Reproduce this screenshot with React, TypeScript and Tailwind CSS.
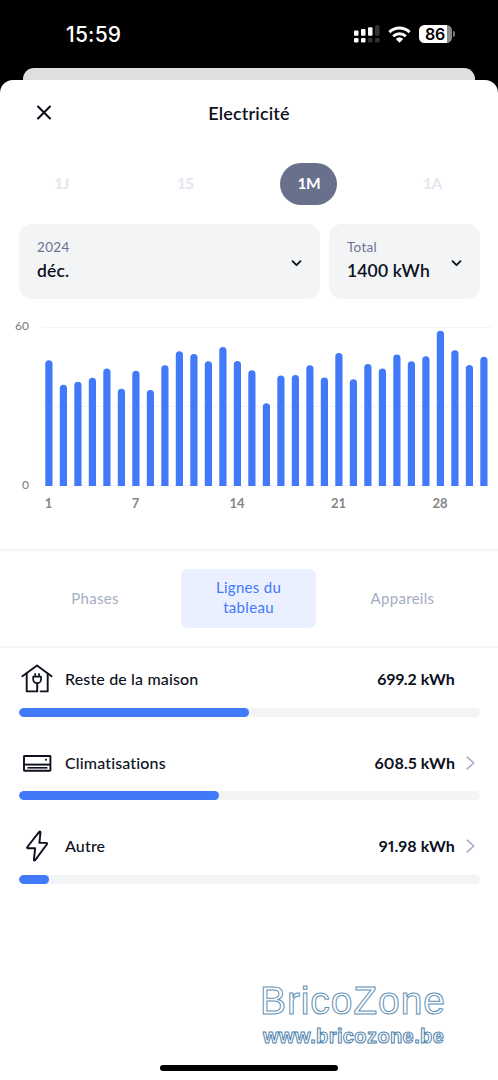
import React from "react";
import clsx from "clsx";

const ranges = [
    { label: "1J" },
    { label: "1S" },
    { label: "1M", active: true },
    { label: "1A" },
];

const dailyUsage = [
    47.6, 38.3, 39.5, 41, 44.5, 36.8, 43.6, 36.3, 45.7, 51, 50, 47.2, 52.6,
    47.3, 43.8, 31.3, 41.8, 42, 45.7, 41.1, 50.3, 40.4, 46.2, 44.5, 49.8, 47.2,
    49.1, 58.8, 51.4, 45.8, 48.9,
];

const dayLabels = [1, 7, 14, 21, 28];

const HouseIcon = () => (
    <svg width="32" height="32" viewBox="0 0 32 32" fill="none" stroke="#0c111d" strokeWidth="1.9" strokeLinecap="round" strokeLinejoin="round">
        <path d="M1.4 13.3 16 2.4l14.6 10.9" />
        <path d="M5.7 10.6v17.8h10.5V20" />
        <path d="M19.6 28.4h7.1V10.6" />
        <path d="M12.2 13.6h7.8v2.8a3.9 3.9 0 0 1-7.8 0z" strokeWidth="1.7" />
        <path d="M14.2 13v-2.2M18 13v-2.2" strokeWidth="1.7" />
    </svg>
);

const AirConditionerIcon = () => (
    <svg width="32" height="32" viewBox="0 0 32 32" fill="none" stroke="#0c111d" strokeWidth="1.9">
        <rect x="3" y="9" width="26.4" height="14.8" rx="0.5" />
        <path d="M3 17.6h26.4" />
        <path d="M6.4 20.8h20" strokeWidth="1.6" />
        <circle cx="25" cy="12.8" r="1" fill="#0c111d" stroke="none" />
    </svg>
);

const BoltIcon = () => (
    <svg width="32" height="32" viewBox="0 0 32 32" fill="none" stroke="#0c111d" strokeWidth="1.9" strokeLinejoin="round">
        <path d="M18.2 1.8 6.3 17q-.7 1.2.6 1.3h7.2l-1.2 11.3q.1 1.7 1.3.5l11.7-15.8q.7-1.3-.7-1.4H18.4l1.1-10.4q-.2-1.5-1.3-.7z" />
    </svg>
);

const circuits = [
    { name: "Reste de la maison", value: "699.2 kWh", percent: 49.9, icon: HouseIcon },
    { name: "Climatisations", value: "608.5 kWh", percent: 43.5, icon: AirConditionerIcon, link: true },
    { name: "Autre", value: "91.98 kWh", percent: 6.6, icon: BoltIcon, link: true },
];

const StatusBar = () => (
    <div className="flex h-[68px] items-center justify-between pl-[66px] pr-[43px] text-white">
        <div className="font-['Inter'] text-[21px] font-medium leading-none tracking-[0.2px]">15:59</div>
        <div className="flex items-center">
            <svg width="26" height="18" viewBox="0 0 26 18" fill="#fff">
                <rect x="0" y="5.4" width="4.5" height="5.4" rx="1" />
                <rect x="7" y="4" width="4.5" height="6.8" rx="1" />
                <rect x="14" y="2.2" width="4.5" height="8.6" rx="1" />
                <rect x="21" y="0.2" width="4.5" height="10.6" rx="1" fill="#333" />
                <rect x="0" y="13" width="4.5" height="4.5" rx="1.3" />
                <rect x="7" y="13" width="4.5" height="4.5" rx="1.3" />
                <rect x="14" y="13" width="4.5" height="4.5" rx="1.3" fill="#333" />
                <rect x="21" y="13" width="4.5" height="4.5" rx="1.3" fill="#333" />
            </svg>
            <svg className="ml-2" width="23" height="17" viewBox="0 0 23 17" fill="none" stroke="#fff" strokeWidth="3">
                <path d="M1.4 6.2a14.5 14.5 0 0 1 20.2 0" />
                <path d="M5.2 10.2a9 9 0 0 1 12.6 0" />
                <path d="M7.8 12.9a5.2 5.2 0 0 1 7.4 0L11.5 16.7z" fill="#fff" stroke="none" />
            </svg>
            <div className="ml-2 flex h-[18px] w-[33px] items-center justify-center rounded-[5.5px] bg-[linear-gradient(90deg,#fff_86%,#8c8c8c_86%)] pr-px font-['Inter'] text-[16px] font-semibold leading-none tracking-[-0.3px] text-black">
                86
            </div>
            <div className="ml-px h-[6px] w-[2px] rounded-r-full bg-[#777]" />
        </div>
    </div>
);

const UsageChart = () => (
    <svg className="block" width="498" height="210" viewBox="0 310 498 210">
        {[327.4, 406.4, 485.8].map((y) => (
            <path key={y} d={`M42 ${y}h449`} stroke="#f2f3f5" strokeWidth="1" />
        ))}
        <text x="29" y="330" textAnchor="end" fontSize="12" fill="#858585" className="font-['Lato'] font-medium">
            60
        </text>
        <text x="29" y="488.5" textAnchor="end" fontSize="12" fill="#858585" className="font-['Lato'] font-medium">
            0
        </text>
        {dailyUsage.map((usage, i) => {
            const x = 45.3 + i * 14.5;
            const top = 486 - usage * 2.642;
            return (
                <path
                    key={i}
                    d={`M${x} 486V${top + 3.6}a3.6 3.6 0 0 1 7.2 0V486z`}
                    fill="#4179f8"
                />
            );
        })}
        {dayLabels.map((day) => (
            <text
                key={day}
                x={48.5 + (day - 1) * 14.5}
                y="507.5"
                textAnchor="middle"
                fontSize="13"
                fill="#858585"
                className="font-['Lato'] font-bold"
            >
                {day}
            </text>
        ))}
    </svg>
);

interface SelectCardProps {
    label: string;
    value: string;
    className?: string;
}

const SelectCard = ({ label, value, className }: SelectCardProps) => (
    <div className={clsx("flex h-[75px] items-center justify-between rounded-[13px] bg-[#f3f4f6] pl-[18.5px] pr-[18px]", className)}>
        <div className="-mt-px whitespace-nowrap">
            <div className="text-[13.5px] leading-[21px] tracking-[0.3px] text-[#6c7393]">{label}</div>
            <div className="text-[17.5px] font-semibold leading-[26px] tracking-[0.15px] text-[#0c111d]">{value}</div>
        </div>
        <svg className="mt-1" width="11" height="7" viewBox="0 0 11 7" fill="none" stroke="#0c111d" strokeWidth="1.8" strokeLinecap="round" strokeLinejoin="round">
            <path d="m1.5 1.2 4 4 4-4" />
        </svg>
    </div>
);

const App = () => {
    return (
        <div className="flex h-[1080px] w-[498px] flex-col overflow-hidden bg-black font-['Lato',sans-serif] text-[#0c111d] [font-variant-ligatures:none]">
            <StatusBar />
            <div className="mx-[23px] h-3 shrink-0 rounded-t-[11px] bg-[#dfdfdf]" />
            <main className="flex flex-1 flex-col rounded-t-[13px] bg-white">
                <header className="grid h-[66px] grid-cols-[80px_1fr_80px] items-center">
                    <svg className="ml-9" width="16" height="16" viewBox="0 0 16 16" fill="none" stroke="#0c111d" strokeWidth="2.1" strokeLinecap="round">
                        <path d="m2 1.5 12 12M14 1.5l-12 12" />
                    </svg>
                    <h1 className="text-center text-[18px] font-semibold tracking-[0.15px]">Electricité</h1>
                </header>

                <nav className="mt-[17px] flex items-center justify-between pl-[33px] pr-[37px]">
                    {ranges.map((range) => (
                        <button
                            key={range.label}
                            className={clsx(
                                "h-[42px] w-[57px] rounded-[21px] text-[15.5px] font-bold tracking-[-0.5px]",
                                range.active ? "bg-[#68708c] text-white" : "text-[#e4e6f0]"
                            )}
                        >
                            {range.label}
                        </button>
                    ))}
                </nav>

                <div className="mt-[18.5px] flex gap-[9px] px-[18.5px]">
                    <SelectCard label="2024" value="déc." className="w-[301px]" />
                    <SelectCard label="Total" value="1400 kWh" className="flex-1" />
                </div>

                <div className="mt-[11.5px]">
                    <UsageChart />
                </div>

                <nav className="mt-[28.5px] grid h-[99px] grid-cols-[190px_117px_191px] items-center justify-items-center border-y-2 border-[#f5f5f6] text-[15px] tracking-[0.3px] text-[#a5acc5]">
                    <button>Phases</button>
                    <button className="h-[59px] w-[135px] rounded-md bg-[#eaf0ff] pb-0.5 leading-5 text-[#4179f8]">
                        Lignes du
                        <br />
                        tableau
                    </button>
                    <button>Appareils</button>
                </nav>

                <ul className="px-[18.5px] pt-[15.5px]">
                    {circuits.map((circuit) => (
                        <li key={circuit.name} className="h-[83.5px]">
                            <div className="flex h-8 items-center pl-[2.5px]">
                                <circuit.icon />
                                <span className="ml-3 flex-1 text-[16px] font-medium tracking-[0.15px]">{circuit.name}</span>
                                <span className="text-[16px] font-bold proportional-nums tracking-[0.1px]">{circuit.value}</span>
                                <span className="flex w-[24.5px] justify-end pr-[5px]">
                                    {circuit.link && (
                                        <svg width="9" height="14" viewBox="0 0 9 14" fill="none" stroke="#a5acc5" strokeWidth="1.6" strokeLinecap="round" strokeLinejoin="round">
                                            <path d="m1.2 1.2 6.6 5.8-6.6 5.8" />
                                        </svg>
                                    )}
                                </span>
                            </div>
                            <div className="mt-[12.5px] h-[9px] overflow-hidden rounded-full bg-[#f3f4f6]">
                                <div className="h-full rounded-full bg-[#4179f8]" style={{ width: `${circuit.percent}%` }} />
                            </div>
                        </li>
                    ))}
                </ul>

                <footer className="mt-auto flex flex-col">
                    <div className="ml-[260px] whitespace-nowrap font-['Liberation_Sans'] text-transparent">
                        <div className="text-[39px] leading-[44px] tracking-[0.9px] [-webkit-text-stroke:1px_#5f8fb4]">BricoZone</div>
                        <div className="mt-px pl-[3px] text-[20px] font-bold leading-6 tracking-[0.4px] [-webkit-text-stroke:1px_#4d82ab]">www.bricozone.be</div>
                    </div>
                    <div className="mb-[9px] mt-[17px] h-[6px] w-[178px] self-center rounded-full bg-black" />
                </footer>
            </main>
        </div>
    );
};

export default App;
